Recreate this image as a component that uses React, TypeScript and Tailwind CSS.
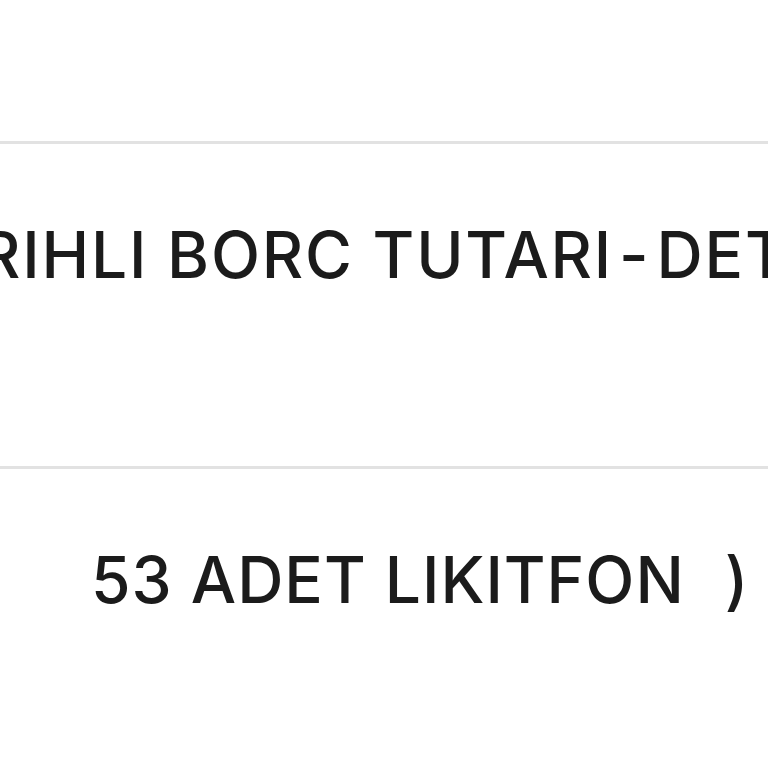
export default function App() {
  return (
    <div
      className="w-[768px] h-[768px] overflow-hidden bg-white text-[#1b1b1b]"
      style={{ fontFamily: 'Inter, sans-serif' }}
    >
      <div className="h-[141px]" />
      <div className="border-t-[3px] border-[#e2e2e2] pt-[79px] pb-[179px]">
        <div className="ml-[-21px] whitespace-nowrap text-[64px] leading-[64px] font-medium tracking-[1.8px]">
          RIHLI BORC TUTARI<span className="mx-[6px]">-</span>DETAYI
        </div>
      </div>
      <div className="border-t-[3px] border-[#e2e2e2] pt-[79px] pb-[179px]">
        <div className="pl-[91px] whitespace-nowrap text-[64px] leading-[64px] font-medium tracking-[1px]">
          53 ADET LIKITFON<span className="ml-[40px]">)</span>
        </div>
      </div>
    </div>
  );
}
